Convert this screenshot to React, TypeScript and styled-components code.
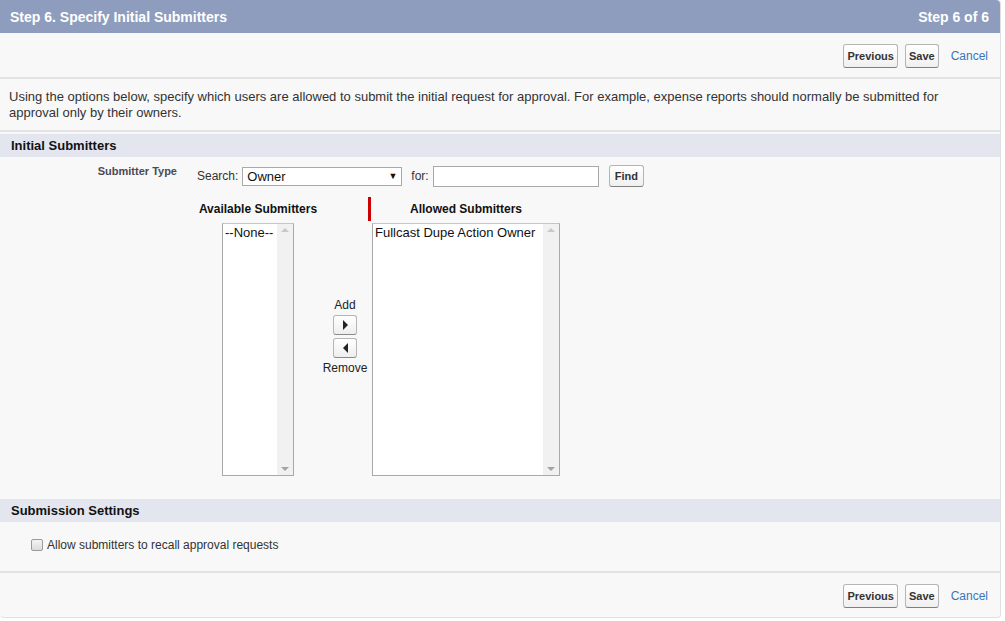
import styled, { createGlobalStyle } from 'styled-components';

const GlobalStyle = createGlobalStyle`
  html, body {
    margin: 0;
    padding: 0;
    background: #ffffff;
    font-family: 'Liberation Sans', Arial, sans-serif;
    color: #222;
  }
`;

const Panel = styled.div`
  width: 1001px;
  background: #f8f8f8;
  border-right: 1px solid #e0e0e0;
  border-bottom: 1px solid #e0e0e0;
  border-radius: 0 4px 4px 4px;
  box-sizing: border-box;
`;

const Header = styled.div`
  height: 33px;
  background: #8e9dbe;
  border-radius: 0 4px 0 0;
  display: flex;
  align-items: center;
  justify-content: space-between;
  padding: 0 11px 0 10px;
  color: #fff;
  font-weight: bold;
  font-size: 14px;
`;

const ButtonRow = styled.div<{ $top?: boolean }>`
  display: flex;
  justify-content: flex-end;
  align-items: center;
  gap: 7px;
  padding: 11px 12px 9px 0;
  border-${({ $top }) => ($top ? 'bottom' : 'top')}: 2px solid #e3e3e3;
`;

const Button = styled.button`
  font-family: 'Liberation Sans', Arial, sans-serif;
  font-size: 11px;
  font-weight: bold;
  color: #333;
  height: 24px;
  padding: 0 3px;
  background: linear-gradient(#ffffff, #f0f0f0);
  border: 1px solid #b5b5b5;
  border-bottom-color: #7f7f7f;
  border-radius: 3px;
  cursor: pointer;
`;

const CancelLink = styled.a`
  font-size: 12px;
  color: #3a75b8;
  margin-left: 5px;
  text-decoration: none;
`;

const Description = styled.div`
  font-size: 13px;
  line-height: 16px;
  padding: 10px 9px 9px;
  color: #333;
  border-bottom: 2px solid #e3e3e3;
`;

const SectionHeader = styled.div<{ $gap?: number }>`
  background: #e3e6ef;
  height: 23px;
  display: flex;
  align-items: center;
  padding-left: 11px;
  font-size: 13px;
  font-weight: bold;
  color: #111;
  margin-top: ${({ $gap }) => $gap ?? 2}px;
`;

const SearchRow = styled.div`
  display: flex;
  align-items: center;
  padding-top: 8px;
  height: 22px;
  font-size: 12px;
  color: #333;
`;

const FieldLabel = styled.div`
  width: 177px;
  text-align: right;
  font-size: 11px;
  font-weight: bold;
  color: #4a4a56;
  align-self: flex-start;
`;

const SearchLabel = styled.span`
  margin-left: 20px;
  margin-right: 4px;
`;

const Select = styled.div`
  width: 160px;
  height: 19px;
  border: 1px solid #a9a9a9;
  background: #fff;
  box-sizing: border-box;
  display: flex;
  align-items: center;
  justify-content: space-between;
  padding: 0 4px;
  font-size: 13px;
  color: #111;
`;

const Caret = styled.span`
  font-size: 9px;
  color: #111;
`;

const ForLabel = styled.span`
  margin-left: 9px;
  margin-right: 4px;
`;

const TextInput = styled.div`
  width: 166px;
  height: 21px;
  border: 1px solid #a9a9a9;
  background: #fff;
  box-sizing: border-box;
`;

const FindButton = styled(Button)`
  margin-left: 10px;
  height: 22px;
  padding: 0 5px;
`;

const Duel = styled.div`
  display: flex;
  padding-left: 222px;
  margin-top: 10px;
`;

const Column = styled.div<{ $w: number }>`
  width: ${({ $w }) => $w}px;
  display: flex;
  flex-direction: column;
  align-items: center;
`;

const ColumnTitle = styled.div`
  height: 26px;
  line-height: 24px;
  font-size: 12px;
  font-weight: bold;
  color: #111;
  white-space: nowrap;
`;

const TitleWrap = styled.div`
  width: 100%;
  display: flex;
  justify-content: center;
  position: relative;
`;

const RequiredBar = styled.span`
  position: absolute;
  left: -4px;
  top: 0;
  width: 3px;
  height: 24px;
  background: #c00;
`;

const ListBox = styled.div<{ $w: number }>`
  width: ${({ $w }) => $w}px;
  height: 253px;
  box-sizing: border-box;
  border: 1px solid #a9a9a9;
  border-top-color: #c5c5c5;
  background: #fff;
  display: flex;
`;

const ListItems = styled.div`
  flex: 1;
  font-size: 13px;
  color: #111;
  padding: 1px 2px;
  white-space: nowrap;
  overflow: hidden;
`;

const ScrollTrack = styled.div`
  width: 16px;
  background: #f1f1f1;
  display: flex;
  flex-direction: column;
  justify-content: space-between;
  align-items: center;
  padding: 4px 0;
`;

const ScrollArrow = styled.span<{ $down?: boolean }>`
  width: 0;
  height: 0;
  border-left: 4px solid transparent;
  border-right: 4px solid transparent;
  ${({ $down }) => ($down ? 'border-top: 4px solid #a3a3a3;' : 'border-bottom: 4px solid #c8c8c8;')}
`;

const Mover = styled.div`
  width: 78px;
  box-sizing: border-box;
  padding-left: 24px;
  display: flex;
  flex-direction: column;
  align-items: center;
  padding-top: 101px;
  font-size: 12px;
  color: #222;
  gap: 3px;
`;

const ArrowButton = styled.button`
  width: 24px;
  height: 20px;
  padding: 0;
  display: flex;
  align-items: center;
  justify-content: center;
  background: linear-gradient(#ffffff, #eeeeee);
  border: 1px solid #b5b5b5;
  border-bottom-color: #8a8a8a;
  border-radius: 3px;
`;

const Tri = styled.span<{ $left?: boolean }>`
  width: 0;
  height: 0;
  border-top: 5px solid transparent;
  border-bottom: 5px solid transparent;
  ${({ $left }) => ($left ? 'border-right: 5px solid #222;' : 'border-left: 5px solid #222;')}
`;

const SettingsBody = styled.div`
  padding: 16px 0 19px 31px;
  display: flex;
  align-items: center;
  font-size: 12px;
  color: #333;
`;

const Checkbox = styled.span`
  width: 10px;
  height: 10px;
  border: 1px solid #9a9a9a;
  border-radius: 2px;
  background: linear-gradient(#f4f4f4, #dcdcdc);
  margin-right: 4px;
`;

export default function App() {
  return (
    <>
      <GlobalStyle />
      <Panel>
        <Header>
          <span>Step 6. Specify Initial Submitters</span>
          <span>Step 6 of 6</span>
        </Header>
        <ButtonRow $top>
          <Button>Previous</Button>
          <Button>Save</Button>
          <CancelLink href="#">Cancel</CancelLink>
        </ButtonRow>
        <Description>
          Using the options below, specify which users are allowed to submit the initial request for approval. For example, expense reports should normally be submitted for approval only by their owners.
        </Description>
        <SectionHeader>Initial Submitters</SectionHeader>
        <SearchRow>
          <FieldLabel>Submitter Type</FieldLabel>
          <SearchLabel>Search:</SearchLabel>
          <Select>
            <span>Owner</span>
            <Caret>▼</Caret>
          </Select>
          <ForLabel>for:</ForLabel>
          <TextInput />
          <FindButton>Find</FindButton>
        </SearchRow>
        <Duel>
          <Column $w={72}>
            <TitleWrap>
              <ColumnTitle>Available Submitters</ColumnTitle>
            </TitleWrap>
            <ListBox $w={72}>
              <ListItems>--None--</ListItems>
              <ScrollTrack>
                <ScrollArrow />
                <ScrollArrow $down />
              </ScrollTrack>
            </ListBox>
          </Column>
          <Mover>
            <span>Add</span>
            <ArrowButton>
              <Tri />
            </ArrowButton>
            <ArrowButton>
              <Tri $left />
            </ArrowButton>
            <span>Remove</span>
          </Mover>
          <Column $w={188}>
            <TitleWrap>
              <RequiredBar />
              <ColumnTitle>Allowed Submitters</ColumnTitle>
            </TitleWrap>
            <ListBox $w={188}>
              <ListItems>Fullcast Dupe Action Owner</ListItems>
              <ScrollTrack>
                <ScrollArrow />
                <ScrollArrow $down />
              </ScrollTrack>
            </ListBox>
          </Column>
        </Duel>
        <SectionHeader $gap={23}>Submission Settings</SectionHeader>
        <SettingsBody>
          <Checkbox />
          Allow submitters to recall approval requests
        </SettingsBody>
        <ButtonRow>
          <Button>Previous</Button>
          <Button>Save</Button>
          <CancelLink href="#">Cancel</CancelLink>
        </ButtonRow>
      </Panel>
    </>
  );
}
